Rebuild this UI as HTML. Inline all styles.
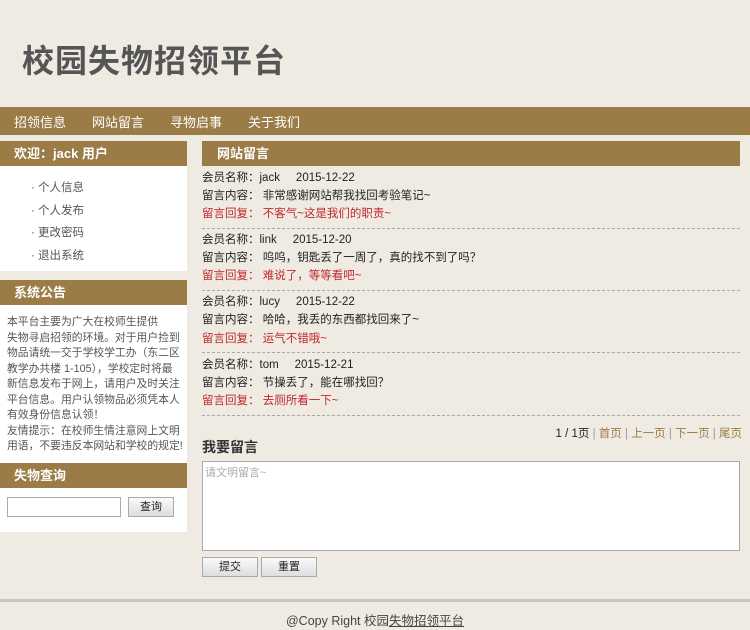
<!DOCTYPE html>
<html><head><meta charset="utf-8"><style>
*{margin:0;padding:0;box-sizing:border-box}
body{width:750px;height:630px;background:#efebe3;font-family:"Liberation Sans","Noto Sans CJK SC",sans-serif;font-size:12px;color:#222;position:relative;overflow:hidden}
.a{position:absolute}
.title{left:22px;top:36px;font-size:32px;font-weight:bold;color:#555;letter-spacing:1px}
.nav{left:0;top:107px;width:750px;height:28px;background:#9b7b46}
.nav span{position:absolute;top:5px;color:#fff;font-size:13px}
.hd{background:#9b7b46;color:#fff;font-weight:bold;font-size:13px;height:25px;line-height:25px}
.white{background:#fff}
.li{left:31px;color:#555;font-size:11.5px}
.ent div{position:absolute;left:202px;font-size:11.5px}
.red{color:#c0282b}
.dash{position:absolute;left:202px;width:538px;border-top:1px dashed #aaa}
.btn{position:absolute;height:20px;border:1px solid #aaa;background:linear-gradient(#fafafa,#ddd);font-size:11px;text-align:center;line-height:18px}
</style></head><body>
<div class="a title">校园失物招领平台</div>
<div class="a nav"><span style="left:14px">招领信息</span><span style="left:92px">网站留言</span><span style="left:170px">寻物启事</span><span style="left:248px">关于我们</span></div>

<div class="a white" style="left:0;top:141px;width:187px;height:130px"></div>
<div class="a hd" style="left:0;top:141px;width:187px;padding-left:14px">欢迎：jack 用户</div>
<div class="a li" style="top:179px">· 个人信息</div>
<div class="a li" style="top:202px">· 个人发布</div>
<div class="a li" style="top:224px">· 更改密码</div>
<div class="a li" style="top:247px">· 退出系统</div>

<div class="a white" style="left:0;top:280px;width:187px;height:252px"></div>
<div class="a hd" style="left:0;top:280px;width:187px;padding-left:14px">系统公告</div>
<div class="a" style="left:7px;top:315px;width:180px;line-height:15.5px;color:#555;font-size:10.8px;white-space:nowrap">本平台主要为广大在校师生提供<br>失物寻启招领的环境。对于用户捡到<br>物品请统一交于学校学工办（东二区<br>教学办共楼 1-105），学校定时将最<br>新信息发布于网上，请用户及时关注<br>平台信息。用户认领物品必须凭本人<br>有效身份信息认领！<br>友情提示：在校师生情注意网上文明<br>用语，不要违反本网站和学校的规定!</div>
<div class="a hd" style="left:0;top:463px;width:187px;padding-left:14px">失物查询</div>
<div class="a" style="left:7px;top:497px;width:114px;height:20px;border:1px solid #aaa;background:#fff"></div>
<div class="btn" style="left:128px;top:497px;width:46px">查询</div>

<div class="a hd" style="left:202px;top:141px;width:538px;padding-left:15px">网站留言</div>
<div class="ent">
<div style="top:169px">会员名称：jack &nbsp;&nbsp;&nbsp; 2015-12-22</div>
<div style="top:187px">留言内容： 非常感谢网站帮我找回考验笔记~</div>
<div class="red" style="top:205px">留言回复： 不客气~这是我们的职责~</div>
<div style="top:231px">会员名称：link &nbsp;&nbsp;&nbsp; 2015-12-20</div>
<div style="top:249px">留言内容： 呜呜，钥匙丢了一周了，真的找不到了吗？</div>
<div class="red" style="top:267px">留言回复： 难说了，等等看吧~</div>
<div style="top:293px">会员名称：lucy &nbsp;&nbsp;&nbsp; 2015-12-22</div>
<div style="top:311px">留言内容： 哈哈，我丢的东西都找回来了~</div>
<div class="red" style="top:330px">留言回复： 运气不错哦~</div>
<div style="top:356px">会员名称：tom &nbsp;&nbsp;&nbsp; 2015-12-21</div>
<div style="top:374px">留言内容： 节操丢了，能在哪找回？</div>
<div class="red" style="top:392px">留言回复： 去厕所看一下~</div>
</div>
<div class="dash" style="top:228px"></div>
<div class="dash" style="top:290px"></div>
<div class="dash" style="top:352px"></div>
<div class="dash" style="top:415px"></div>
<div class="a" style="right:8px;top:425px;font-size:11.5px">1 / 1页 <span style="color:#999">|</span> <span style="color:#9b7b46">首页</span> <span style="color:#999">|</span> <span style="color:#9b7b46">上一页</span> <span style="color:#999">|</span> <span style="color:#9b7b46">下一页</span> <span style="color:#999">|</span> <span style="color:#9b7b46">尾页</span></div>
<div class="a" style="left:202px;top:437px;font-size:14px;font-weight:bold;color:#333">我要留言</div>
<div class="a" style="left:202px;top:461px;width:538px;height:90px;background:#fff;border:1px solid #aaa;color:#aaa;font-size:11px;padding:2px">请文明留言~</div>
<div class="btn" style="left:202px;top:557px;width:56px">提交</div>
<div class="btn" style="left:261px;top:557px;width:56px">重置</div>

<div class="a" style="left:0;top:599px;width:750px;height:3px;background:#c8c5c0"></div>
<div class="a" style="left:0;top:610px;width:750px;text-align:center;font-size:12.5px;color:#444">@Copy Right 校园<u>失物招领平台</u></div>
</body></html>
